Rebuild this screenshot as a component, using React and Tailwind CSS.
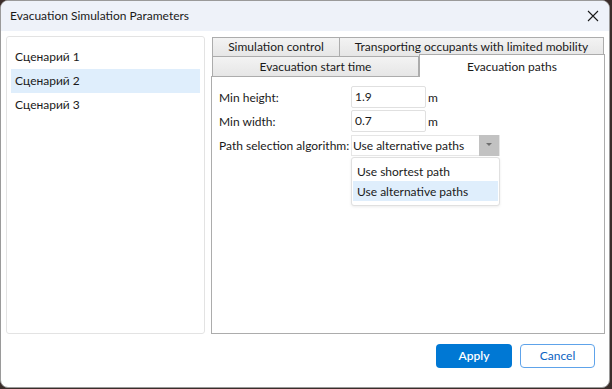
import React from "react";

function CloseIcon() {
  return (
    <svg width="12" height="12" viewBox="0 0 12 12">
      <path d="M1 1 L11 11 M11 1 L1 11" stroke="#1a1a1a" strokeWidth="1.1" />
    </svg>
  );
}

export default function App() {
  const font = "font-['Segoe_UI','Lato','Liberation_Sans',sans-serif]";
  return (
    <div className={`w-[612px] h-[389px] bg-[#3b2d2a] ${font} text-[12px] text-[#1a1a1a]`}>
      <div className="w-[610px] h-[388px] bg-white rounded-[8px] border border-[#9a9a9a] overflow-hidden flex flex-col">
        {/* Title bar */}
        <div className="h-[30px] shrink-0 bg-[#eef2f9] flex items-center justify-between pl-[9px] pr-[10px]">
          <span className="text-[12px] leading-none">Evacuation Simulation Parameters</span>
          <CloseIcon />
        </div>
        {/* Body */}
        <div className="flex gap-[6px] pl-[5px] pt-[5px] h-[304px]">
          {/* List */}
          <div className="w-[199px] h-[298px] border border-[#e3e3e3] rounded-[3px] px-[4px] pt-[8px] flex flex-col">
            <div className="h-[24px] flex items-center pl-[4px]">Сценарий 1</div>
            <div className="h-[24px] flex items-center pl-[4px] bg-[#dfeefc]">Сценарий 2</div>
            <div className="h-[24px] flex items-center pl-[4px]">Сценарий 3</div>
          </div>
          {/* Tabs */}
          <div className="w-[394px] h-[298px] flex flex-col">
            <div className="flex pl-[1px] h-[21px] pt-[1px]">
              <div className="w-[128px] h-[20px] border border-[#acacac] bg-gradient-to-b from-[#f3f3f3] to-[#e6e6e6] flex items-center justify-center">Simulation control</div>
              <div className="w-[264px] h-[20px] border border-l-0 border-[#acacac] bg-gradient-to-b from-[#f3f3f3] to-[#e6e6e6] flex items-center justify-center">Transporting occupants with limited mobility</div>
            </div>
            <div className="flex pl-[1px] h-[20px] items-end relative">
              <div className="w-[207px] h-[20px] border border-t-0 border-[#acacac] bg-gradient-to-b from-[#f3f3f3] to-[#e6e6e6] flex items-center justify-center pt-[1px]">Evacuation start time</div>
              <div className="w-[186px] h-[23px] border border-b-0 border-[#acacac] bg-white flex items-center justify-center pt-[1px] -mt-[3px] relative z-10">Evacuation paths</div>
            </div>
            <div className="flex-1 border border-[#acacac] -mt-[1px] bg-white pl-[7px] pt-[9px] relative">
              <div className="flex items-center h-[22px]">
                <span className="w-[132px] pt-[1px]">Min height:</span>
                <div className="w-[75px] h-[22px] border border-[#e0e0e0] rounded-[2px] flex items-center pl-[3px]">1.9</div>
                <span className="ml-[2px] pt-[1px]">m</span>
              </div>
              <div className="flex items-center h-[22px] mt-[2px]">
                <span className="w-[132px] pt-[1px]">Min width:</span>
                <div className="w-[75px] h-[22px] border border-[#e0e0e0] rounded-[2px] flex items-center pl-[3px]">0.7</div>
                <span className="ml-[2px] pt-[1px]">m</span>
              </div>
              <div className="flex items-center h-[22px] mt-[2px]">
                <span className="w-[132px] pt-[1px]">Path selection algorithm:</span>
                <div className="w-[149px] h-[21px] border border-[#e6e6e6] flex items-center">
                  <span className="flex-1 pl-[1px] pt-[1px]">Use alternative paths</span>
                  <div className="w-[20px] h-[21px] bg-[#c2c2c2] flex items-center justify-center">
                    <svg width="6" height="4" viewBox="0 0 6 4"><path d="M0 0 L6 0 L3 3 Z" fill="#6e6e6e" /></svg>
                  </div>
                </div>
              </div>
              <div className="absolute left-[139px] top-[80px] w-[149px] h-[49px] border border-[#e0e0e0] rounded-[3px] bg-white shadow-[0_1px_3px_rgba(0,0,0,0.08)] px-[1px] pt-[4px]">
                <div className="h-[19px] flex items-center pl-[4px] pt-[1px]">Use shortest path</div>
                <div className="h-[20px] flex items-center pl-[4px] pt-[1px] bg-[#dfeefc]">Use alternative paths</div>
              </div>
            </div>
          </div>
        </div>
        {/* Footer */}
        <div className="flex-1 flex justify-end items-start pt-[9px] pr-[14px] gap-[8px]">
          <button className="w-[76px] h-[24px] rounded-[4px] bg-[#0078d4] text-white font-semibold text-[12px]">Apply</button>
          <button className="w-[75px] h-[24px] rounded-[4px] border border-[#5ea3ea] bg-white text-[#0a63c2] text-[12px]">Cancel</button>
        </div>
      </div>
    </div>
  );
}
